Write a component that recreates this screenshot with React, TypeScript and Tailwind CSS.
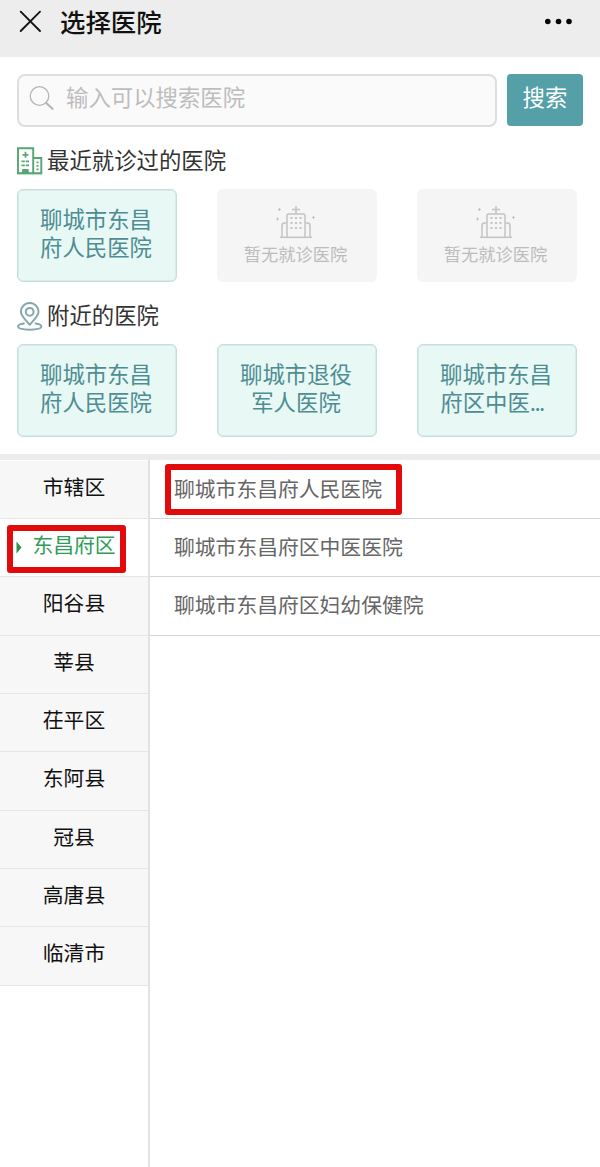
import React, { useState } from 'react';

const recentHospitals: (string[] | null)[] = [['聊城市东昌', '府人民医院'], null, null];

const nearbyHospitals: string[][] = [
  ['聊城市东昌', '府人民医院'],
  ['聊城市退役', '军人医院'],
  ['聊城市东昌', '府区中医...'],
];

const districts = ['市辖区', '东昌府区', '阳谷县', '莘县', '茌平区', '东阿县', '冠县', '高唐县', '临清市'];

const hospitals = ['聊城市东昌府人民医院', '聊城市东昌府区中医医院', '聊城市东昌府区妇幼保健院'];

const HospitalIcon = () => (
  <svg className="-mt-px" width="26" height="28" viewBox="0 0 26 28" fill="none" stroke="#55a672" strokeWidth="1.9">
    <path d="M1 26.5V1.2h15.2v25.3" />
    <path d="M16.5 11h7.8v15.5" />
    <path d="M0 26.3h25.2" strokeWidth="2.2" />
    <path d="M8.5 4.8v6M5.5 7.8h6" strokeWidth="1.7" />
    <path d="M4.5 14.4h7.5M4.5 18.4h7.5" strokeWidth="1.6" strokeDasharray="3.3 0.9" />
    <path d="M5.6 26v-3.5h5.6v3.5z" fill="#55a672" strokeWidth="1" />
    <path d="M20.5 14.5v1.7M20.5 18v1.7M20.5 21.5v1.7" strokeWidth="2" />
  </svg>
);

const LocationIcon = () => (
  <svg width="26" height="30" viewBox="0 0 26 30" fill="none" stroke="#83a9ae" strokeWidth="2">
    <path d="M12.7 22.8C9 18.4 3.9 14 3.9 9.7a8.8 8.8 0 0 1 17.6 0c0 4.3-5.1 8.7-8.8 13.1z" strokeLinejoin="round" />
    <circle cx="12.7" cy="9.8" r="3.9" />
    <path d="M6.8 21.5C3 22 1 23.2 1 24.6c0 2 4.8 3.1 11.7 3.1s11.7-1.1 11.7-3.1c0-1.4-2-2.6-5.8-3.1" strokeLinecap="round" />
  </svg>
);

const EmptyIcon = () => (
  <svg className="ml-px" width="42" height="34" viewBox="0 0 42 34" fill="none" stroke="#c3c3c3" strokeWidth="1.5">
    <path d="M5 32.3h32" />
    <path d="M12 32V10.5Q12 9 13.5 9h15Q30 9 30 10.5V32" />
    <path d="M7 32V20.5Q7 18 9.5 18H12M30 18h2.5Q35 18 35 20.5V32" />
    <path d="M21 1v8M17 4.5h8" />
    <path d="M16.5 12v12.5M21 12v12.5M25.5 12v12.5" strokeWidth="2" strokeDasharray="2 3" />
    <path d="M4.5 3v3M3 4.5h3M2.5 12.5v3M1 14h3M38.5 11v3M37 12.5h3" strokeWidth="1" />
  </svg>
);

const HospitalCard: React.FC<{ lines: string[] }> = ({ lines }) => (
  <button className="h-[93px] w-[160px] rounded-md border-[1.5px] border-[#c6dfde] bg-[#e8f8f5] pr-[2px] pb-[7px] text-center text-[22.4px] leading-[28.3px] text-[#4e8d93] shadow-[inset_0_0_0_0.5px_#c6dfde]">
    {lines.map((line) => (
      <span key={line} className="block whitespace-nowrap">
        {line.replace('...', '')}
        {line.endsWith('...') && <span className="mr-[8px] tracking-[-1.6px]">...</span>}
      </span>
    ))}
  </button>
);

const EmptyCard = () => (
  <div className="flex h-[93px] w-[160px] flex-col items-center rounded-md bg-[#f5f5f5] pt-[16px] pr-[3px] text-[17.3px] leading-[30px] text-[#bcbcbc]">
    <EmptyIcon />
    <span>暂无就诊医院</span>
  </div>
);

const App: React.FC = () => {
  const [active, setActive] = useState('东昌府区');
  const [keyword, setKeyword] = useState('');

  return (
    <div className="flex h-[1167px] w-[600px] flex-col overflow-hidden bg-white font-['Noto_Sans_CJK_SC',sans-serif]">
      <header className="flex h-[57px] shrink-0 items-start bg-[#ededed] pr-[27px] pl-[19px]">
        <svg className="mt-[10px]" width="23" height="23" viewBox="0 0 23 23" stroke="#151515" strokeWidth="1.9" strokeLinecap="round">
          <path d="M1.7 1.7l19.3 19.3M21 1.7L1.7 21" />
        </svg>
        <h1 className="ml-[18px] text-[25.4px] leading-[43px] font-medium text-[#111]">选择医院</h1>
        <svg className="mt-[18px] ml-auto" width="28" height="7" viewBox="0 0 28 7" fill="#050505">
          <circle cx="2.8" cy="3.5" r="2.8" />
          <circle cx="13.5" cy="3.5" r="2.8" />
          <circle cx="24" cy="3.5" r="2.8" />
        </svg>
      </header>

      <div className="flex shrink-0 gap-2.5 px-[17px] pt-[17px]">
        <label className="flex h-[53px] w-[480px] items-start rounded-lg border-2 border-[#dedede] bg-[#fafafa] pl-[10px]">
          <svg className="mt-[9px] shrink-0" width="26" height="26" viewBox="0 0 26 26" fill="none" stroke="#b5b5b5" strokeLinecap="round">
            <circle cx="10.5" cy="11" r="9.3" strokeWidth="1.3" />
            <path d="M17.2 18l6.3 5.8" strokeWidth="2.2" />
          </svg>
          <input
            className="ml-[11px] h-[40px] w-[400px] bg-transparent text-[22.4px] text-[#555] outline-none placeholder:text-[#bdbdbd]"
            placeholder="输入可以搜索医院"
            value={keyword}
            onChange={(e) => setKeyword(e.target.value)}
          />
        </label>
        <button className="h-[52px] w-[76px] rounded-[4px] bg-[#549fa8] pb-[6px] text-[22.4px] text-white">搜索</button>
      </div>

      {/* 最近就诊 */}
      <section className="shrink-0 px-[17px] pt-[19px]">
        <div className="flex h-[31px] items-center gap-[4px]">
          <HospitalIcon />
          <h2 className="pb-[5px] text-[22.4px] leading-[30px] text-[#333]">最近就诊过的医院</h2>
        </div>
        <div className="mt-[12px] flex gap-10">
          {recentHospitals.map((lines, i) => (lines ? <HospitalCard key={i} lines={lines} /> : <EmptyCard key={i} />))}
        </div>
      </section>

      {/* 附近医院 */}
      <section className="shrink-0 px-[17px] pt-[19px]">
        <div className="flex h-[31px] items-center gap-[4px]">
          <LocationIcon />
          <h2 className="pb-[5px] text-[22.4px] leading-[30px] text-[#333]">附近的医院</h2>
        </div>
        <div className="mt-[12px] flex gap-10">
          {nearbyHospitals.map((lines, i) => (
            <HospitalCard key={i} lines={lines} />
          ))}
        </div>
      </section>

      <div className="mt-[17px] h-[6px] shrink-0 bg-[#ececec]" />

      <div className="flex flex-1">
        <aside className="w-[150px] shrink-0 border-r-2 border-[#e2e2e2] pt-[0.5px]">
          {districts.map((name) => (
            <div
              key={name}
              onClick={() => setActive(name)}
              className={`relative h-[58.35px] border-b border-[#e6e6e6] text-center text-[20.8px] leading-[51px] ${
                name === active ? 'bg-white text-[#2f9c58]' : 'bg-[#f7f7f7] text-[#111]'
              }`}
            >
              {name}
              {name === active && (
                <>
                  <svg className="absolute top-[22px] left-[16px]" width="6" height="13" viewBox="0 0 6 13" fill="#2f8f50">
                    <path d="M0.5 0.5L5.5 6.5L0.5 12.5z" />
                  </svg>
                  <span className="absolute top-[6px] left-[7px] h-[48px] w-[119px] rounded-[3px] border-6 border-[#e20a0a]" />
                </>
              )}
            </div>
          ))}
        </aside>
        <main className="flex-1 pt-[0.5px]">
          {hospitals.map((name, i) => (
            <div key={name} className="relative h-[58.35px] border-b border-[#d4d4d4] pl-[24px] text-[20.8px] leading-[54.5px] text-[#666]">
              {name}
              {i === 0 && <span className="absolute top-[3.5px] left-[15px] h-[51px] w-[237px] rounded-[3px] border-6 border-[#e20a0a]" />}
            </div>
          ))}
        </main>
      </div>
    </div>
  );
};

export default App;
